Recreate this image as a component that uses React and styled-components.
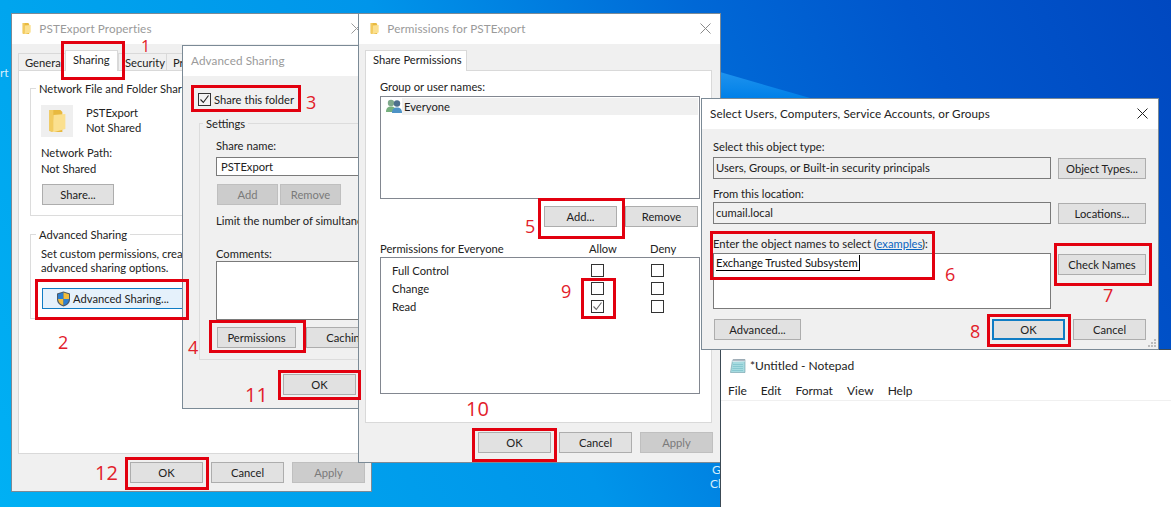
import React from 'react';
import styled, { createGlobalStyle } from 'styled-components';

const GlobalStyle = createGlobalStyle`
  html, body { margin: 0; padding: 0; }
  body {
    width: 1171px;
    height: 507px;
    overflow: hidden;
    font-family: Lato, "Noto Sans", sans-serif;
    font-size: 11.2px;
    color: #222;
  }
  * { box-sizing: border-box; }
`;

const Desktop = styled.div`
  position: relative;
  width: 1171px;
  height: 507px;
  overflow: hidden;
  background: linear-gradient(65deg, #00b0f4 0%, #00a5ee 17%, #0095ea 43%, #0068d6 66%, #0056cc 81%, #0048c0 100%);
`;

const Beam = styled.div`
  position: absolute;
  left: 720px;
  top: 72px;
  width: 90px;
  height: 26px;
  background: linear-gradient(180deg, #1f93ee, #0080e8);
  clip-path: polygon(0 0, 100% 100%, 0 100%);
`;

const DesktopLabel = styled.span`
  position: absolute;
  left: ${(p) => p.$x}px;
  top: ${(p) => p.$y}px;
  color: #d5eefb;
  font-size: 12px;
  line-height: 14px;
`;

const Window = styled.section`
  position: absolute;
  isolation: isolate;
  left: ${(p) => p.$x}px;
  top: ${(p) => p.$y}px;
  width: ${(p) => p.$w}px;
  height: ${(p) => p.$h}px;
  border: 1px solid #7b8a96;
  background: #f0f0f0;
  overflow: hidden;
  display: flex;
  flex-direction: column;
  align-items: flex-start;
`;

const TitleBar = styled.header`
  flex: none;
  width: 100%;
  height: 30px;
  background: #fff;
  display: flex;
  align-items: center;
  gap: 8px;
  padding: 0 ${(p) => p.$right ?? 9}px 2px ${(p) => p.$left ?? 9}px;
  position: relative;
`;

const TitleText = styled.span`
  font-size: 11.7px;
  letter-spacing: 0.1px;
  color: ${(p) => (p.$active ? '#222' : '#9a9a9a')};
  white-space: nowrap;
`;

const CloseIcon = styled.svg`
  margin-left: auto;
  flex: none;
`;

const Body = styled.div`
  width: 100%;
  padding: ${(p) => p.$pad || '7px 0 0 6px'};
  display: flex;
  flex-direction: column;
  align-items: flex-start;
  white-space: nowrap;
`;

const TabRow = styled.div`
  display: flex;
  align-items: flex-end;
  height: 20px;
  position: relative;
  z-index: 1;
  margin-bottom: -1px;
`;

const Tab = styled.div`
  height: ${(p) => (p.$active ? 21 : 18)}px;
  width: ${(p) => p.$w}px;
  padding-left: ${(p) => (p.$active ? 7 : 6)}px;
  line-height: ${(p) => (p.$active ? 17 : 18)}px;
  background: ${(p) => (p.$active ? '#fff' : '#f0f0f0')};
  border: 1px solid #d9d9d9;
  border-bottom: ${(p) => (p.$active ? 'none' : '1px solid #d9d9d9')};
  border-right: ${(p) => (p.$active ? '1px solid #d9d9d9' : 'none')};
  overflow: hidden;
`;

const TabPane = styled.div`
  width: 347px;
  height: ${(p) => p.$h}px;
  background: #fff;
  border: 1px solid #d9d9d9;
  padding: ${(p) => p.$pad};
  display: flex;
  flex-direction: column;
  align-items: flex-start;
`;

const Group = styled.fieldset`
  margin: ${(p) => p.$margin || 0};
  padding: ${(p) => p.$pad || '0 0 0 10px'};
  width: ${(p) => p.$w || 325}px;
  height: ${(p) => p.$h}px;
  min-width: 0;
  flex: none;
  border: 1px solid #dcdcdc;
  display: block;
`;

const Legend = styled.legend`
  margin-left: ${(p) => p.$ml ?? -5}px;
  padding: 0 3px;
  line-height: 15px;
`;

const Text = styled.div`
  line-height: ${(p) => p.$lh || 15}px;
  margin: ${(p) => p.$margin || 0};
`;

const ShareRow = styled.div`
  display: flex;
  gap: 13px;
  margin-top: 9px;
`;

const FolderBox = styled.div`
  width: 32px;
  height: 32px;
  background: #efefef;
  display: flex;
  align-items: center;
  justify-content: center;
`;

const Button = styled.div`
  flex: none;
  width: ${(p) => p.$w || 73}px;
  height: 21px;
  margin: ${(p) => p.$margin || 0};
  display: flex;
  align-items: center;
  justify-content: center;
  gap: 2px;
  background: ${(p) => (p.$focus ? '#e5f1fb' : p.$off ? '#cccccc' : '#e1e1e1')};
  border: 1px solid ${(p) => (p.$focus ? '#0f7cc4' : p.$off ? '#bfbfbf' : '#adadad')};
  color: ${(p) => (p.$off ? '#7a7a7a' : '#222')};
  ${(p) => p.$default && 'border-width: 2px; background: #e1e1e1;'}
`;

const ButtonRow = styled.div`
  display: flex;
  gap: ${(p) => p.$gap ?? 8}px;
  margin: ${(p) => p.$margin || 0};
`;

const CheckRow = styled.label`
  display: flex;
  align-items: center;
  gap: 3px;
  margin: ${(p) => p.$margin || 0};
  height: 13px;
`;

const CheckBox = styled.span`
  width: 13px;
  height: 13px;
  border: 1px solid #333;
  background: ${(p) => (p.$shade ? '#f3f3f3' : '#fff')};
  display: flex;
  align-items: center;
  justify-content: center;
`;

const Input = styled.div`
  width: ${(p) => p.$w || 200}px;
  height: ${(p) => p.$h || 19}px;
  margin: ${(p) => p.$margin || 0};
  background: ${(p) => (p.$readonly ? '#f0f0f0' : '#fff')};
  border: 1px solid #7a7a7a;
  padding: ${(p) => p.$pad || '1px 4px'};
  line-height: 15px;
`;

const ListBox = styled.div`
  width: 320px;
  height: 103px;
  margin-top: 2px;
  border: 1px solid #828790;
  background: #fff;
  padding: 1px 1px 1px 5px;
`;

const ListRow = styled.div`
  display: flex;
  align-items: center;
  height: 17px;
`;

const ListLabel = styled.span`
  flex: 1;
  background: #f0f0f0;
  line-height: 17px;
  padding-left: 2px;
`;

const PermHeader = styled.div`
  display: grid;
  grid-template-columns: 209px 61px auto;
  line-height: 15px;
  margin-top: 14px;
  width: 320px;
`;

const PermGrid = styled.div`
  width: 320px;
  height: 137px;
  margin-top: 1px;
  border: 1px solid #828790;
  background: #fff;
  padding: 3px 0 0 11px;
  display: grid;
  grid-template-columns: 199px 60px auto;
  grid-auto-rows: 18px;
  align-items: center;
`;

const Field = styled.div`
  display: flex;
  gap: 7px;
  align-items: ${(p) => (p.$top ? 'flex-start' : 'flex-end')};
  margin: ${(p) => p.$margin || 0};
`;

const Typed = styled.span`
  border-bottom: 1px solid #000;
  border-right: 1px solid #000;
  color: #111;
  display: inline-block;
  line-height: 15px;
  padding-right: 1px;
`;

const Link = styled.a`
  color: #0a64c0;
  text-decoration: underline;
`;

const Grip = styled.svg`
  position: absolute;
  right: 1px;
  bottom: 1px;
`;

const BottomRow = styled.div`
  display: flex;
  justify-content: space-between;
  width: 433px;
  margin-top: 10px;
  padding-left: 1px;
`;

const Notepad = styled.section`
  position: absolute;
  left: 720px;
  top: 349px;
  width: 460px;
  height: 170px;
  background: #fff;
  border-left: 1px solid #3c4a55;
  border-top: 1px solid #3c4a55;
  font-size: 12px;
`;

const NotepadTitle = styled.div`
  height: 31px;
  display: flex;
  align-items: center;
  gap: 4px;
  padding-left: 9px;
`;

const MenuBar = styled.nav`
  height: 19px;
  display: flex;
  gap: 14px;
  padding-left: 7px;
  align-items: center;
  border-bottom: 1px solid #f0f0f0;
  box-sizing: content-box;
  line-height: 19px;
`;

const RedBox = styled.div`
  position: absolute;
  left: ${(p) => p.$x}px;
  top: ${(p) => p.$y}px;
  width: ${(p) => p.$w}px;
  height: ${(p) => p.$h}px;
  border: 3px solid #e2000f;
`;

const RedNumber = styled.span`
  position: absolute;
  left: ${(p) => p.$x}px;
  top: ${(p) => p.$y}px;
  font-family: "Open Sans", sans-serif;
  font-size: ${(p) => p.$size}px;
  line-height: 20px;
  color: #e2202a;
`;

const FolderIcon = ({ size = 26 }) => (
  <svg width={size * 0.72} height={size} viewBox="0 0 18 26">
    <path d="M1 2h11l2 2v20H4l-3-1z" fill="#e8b93f" />
    <path d="M5 7l12-1v15l-11 3H4z" fill="#fbe08f" />
    <path d="M1 2h4v21H1z" fill="#f2cb5f" />
  </svg>
);

const CloseX = ({ color, size = 11 }) => (
  <CloseIcon width={size} height={size} viewBox="0 0 11 11">
    <path d="M.5.5l10 10M10.500.5l-10 10" stroke={color} strokeWidth="1" fill="none" />
  </CloseIcon>
);

const Shield = () => (
  <svg width="15" height="16" viewBox="0 0 15 16">
    <path d="M7.500 0.500l6.500 2v6c0 3.500-3 6-6.500 7C4 14.500 1 12 1 8.500v-6z" fill="#4a5a68" />
    <path d="M7.500 1.500v6.500H2V3.200z" fill="#2c7fd0" />
    <path d="M7.500 1.500v6.500H13V3.200z" fill="#f3bd3a" />
    <path d="M2 8h5.500v6.300C4.500 13.500 2.300 11.500 2 8z" fill="#f3bd3a" />
    <path d="M13 8H7.500v6.300C10.500 13.500 12.700 11.500 13 8z" fill="#2c7fd0" />
  </svg>
);

const Users = () => (
  <svg width="16" height="15" viewBox="0 0 16 15">
    <circle cx="5" cy="4" r="3.200" fill="#7fa98c" />
    <path d="M0 13c0-4 2-5.500 5-5.500s5 1.500 5 5.500z" fill="#76b07e" />
    <circle cx="11" cy="4.500" r="3.200" fill="#4d6f8c" />
    <path d="M6 14c0-4 2-5.500 5-5.500s5 1.500 5 5.500z" fill="#4e93c6" />
  </svg>
);

const NotepadIcon = () => (
  <svg width="16" height="16" viewBox="0 0 16 16">
    <path d="M2.500 2L15 1.500V14.500H0.500z" fill="#a6dbe0" stroke="#6f9aa6" strokeWidth="0.6" />
    <path d="M2.500 2L15 1.500v2L2.300 4z" fill="#dbe9ee" />
    <path d="M3 6.500h10M2.700 8.500h10.300M2.400 10.500h10.600M2.100 12.500h10.900" stroke="#7fc3cc" strokeWidth="0.8" />
    <path d="M4 1v2M6 1v2M8 1v2M10 1v2M12 1v2M14 1v2" stroke="#667" strokeWidth="0.7" />
  </svg>
);

const Check = ({ color }) => (
  <svg width="11" height="11" viewBox="0 0 11 11">
    <path d="M1.500 5.500l2.800 3L9.500 1.500" fill="none" stroke={color} strokeWidth="1.100" />
  </svg>
);

const marks = [
  { x: 61, y: 41, w: 64, h: 39 },
  { x: 191, y: 85, w: 110, h: 27 },
  { x: 35, y: 279, w: 154, h: 41 },
  { x: 209, y: 320, w: 97, h: 33 },
  { x: 278, y: 370, w: 83, h: 30 },
  { x: 125, y: 457, w: 84, h: 33 },
  { x: 538, y: 198, w: 87, h: 41 },
  { x: 581, y: 278, w: 35, h: 41 },
  { x: 472, y: 428, w: 85, h: 34 },
  { x: 710, y: 231, w: 225, h: 49 },
  { x: 1054, y: 243, w: 98, h: 43 },
  { x: 987, y: 314, w: 84, h: 33 },
];

const numbers = [
  ['1', 141, 36, 16], ['3', 306, 92, 18], ['2', 58, 332, 18], ['4', 188, 337, 18],
  ['11', 245, 385, 20], ['12', 95, 463, 20], ['5', 525, 216, 18], ['9', 561, 281, 18],
  ['10', 466, 399, 20], ['6', 945, 264, 18], ['7', 1103, 285, 18], ['8', 970, 321, 18],
];

function App() {
  return (
    <Desktop>
      <GlobalStyle />
      <Beam />
      <DesktopLabel $x={0} $y={66}>rt</DesktopLabel>
      <DesktopLabel $x={712} $y={463}>G</DesktopLabel>
      <DesktopLabel $x={710} $y={477}>Cl</DesktopLabel>

      <Window $x={11} $y={13} $w={361} $h={479}>
        <TitleBar $left={10}>
          <FolderIcon size={13} />
          <TitleText>PSTExport Properties</TitleText>
          <CloseX color="#9a9a9a" />
        </TitleBar>
        <Body>
          <TabRow>
            <Tab $w={47}>General</Tab>
            <Tab $w={53} $active>Sharing</Tab>
            <Tab $w={48}>Security</Tab>
            <Tab $w={60}>Previous Versions</Tab>
          </TabRow>
          <TabPane $h={384} $pad="10px 0 0 11px">
            <Group $h={135}>
              <Legend>Network File and Folder Sharing</Legend>
              <ShareRow>
                <FolderBox><FolderIcon /></FolderBox>
                <div>
                  <Text>PSTExport</Text>
                  <Text>Not Shared</Text>
                </div>
              </ShareRow>
              <Text $lh={16} $margin="8px 0 0">Network Path:</Text>
              <Text $lh={16}>Not Shared</Text>
              <Button $w={72} $margin="7px 0 0 1px">Share...</Button>
            </Group>
            <Group $h={92} $margin="11px 0 0">
              <Legend>Advanced Sharing</Legend>
              <Text $lh={14} $margin="5px 0 0">Set custom permissions, create multiple shares, and set other</Text>
              <Text $lh={13}>advanced sharing options.</Text>
              <Button $w={141} $focus $margin="14px 0 0 1px">
                <Shield />Advanced Sharing...
              </Button>
            </Group>
          </TabPane>
          <ButtonRow $margin="8px 0 0 112px">
            <Button>OK</Button>
            <Button>Cancel</Button>
            <Button $off>Apply</Button>
          </ButtonRow>
        </Body>
      </Window>

      <Window $x={182} $y={45} $w={177} $h={364}>
        <TitleBar $left={8}>
          <TitleText>Advanced Sharing</TitleText>
        </TitleBar>
        <Body $pad="17px 0 0 15px">
          <CheckRow>
            <CheckBox $shade><Check color="#222" /></CheckBox>
            Share this folder
          </CheckRow>
          <Group $w={220} $h={244} $margin="10px 0 0 1px" $pad="0 0 0 16px">
            <Legend $ml={-13}>Settings</Legend>
            <Text $margin="7px 0 0">Share name:</Text>
            <Input $margin="4px 0 0">PSTExport</Input>
            <ButtonRow $gap={2} $margin="8px 0 0 1px">
              <Button $w={61} $off>Add</Button>
              <Button $w={61} $off>Remove</Button>
            </ButtonRow>
            <Text $lh={14} $margin="9px 0 0">Limit the number of simultaneous users to:</Text>
            <Text $lh={14} $margin="19px 0 0">Comments:</Text>
            <Input $h={59} />
            <ButtonRow $gap={10} $margin="7px 0 0 1px">
              <Button $w={79}>Permissions</Button>
              <Button $w={80}>Caching</Button>
            </ButtonRow>
          </Group>
          <Button $margin="14px 0 0 85px">OK</Button>
        </Body>
      </Window>

      <Window $x={358} $y={13} $w={363} $h={450}>
        <TitleBar $left={11} $right={9}>
          <FolderIcon size={13} />
          <TitleText>Permissions for PSTExport</TitleText>
          <CloseX color="#8a8a8a" />
        </TitleBar>
        <Body>
          <TabRow>
            <Tab $w={102} $active>Share Permissions</Tab>
          </TabRow>
          <TabPane $h={353} $pad="8px 0 0 14px">
            <Text>Group or user names:</Text>
            <ListBox>
              <ListRow>
                <Users />
                <ListLabel>Everyone</ListLabel>
              </ListRow>
            </ListBox>
            <ButtonRow $margin="7px 0 0 164px">
              <Button>Add...</Button>
              <Button>Remove</Button>
            </ButtonRow>
            <PermHeader>
              <span>Permissions for Everyone</span>
              <span>Allow</span>
              <span>Deny</span>
            </PermHeader>
            <PermGrid>
              <span>Full Control</span><CheckBox /><CheckBox />
              <span>Change</span><CheckBox /><CheckBox />
              <span>Read</span><CheckBox><Check color="#666" /></CheckBox><CheckBox />
            </PermGrid>
          </TabPane>
          <ButtonRow $margin="9px 0 0 113px">
            <Button>OK</Button>
            <Button>Cancel</Button>
            <Button $off>Apply</Button>
          </ButtonRow>
        </Body>
      </Window>

      <Notepad>
        <NotepadTitle>
          <NotepadIcon />
          <span>*Untitled - Notepad</span>
        </NotepadTitle>
        <MenuBar>
          <span>File</span>
          <span>Edit</span>
          <span>Format</span>
          <span>View</span>
          <span>Help</span>
        </MenuBar>
      </Notepad>

      <Window $x={701} $y={98} $w={458} $h={252}>
        <TitleBar $left={8} $right={10}>
          <TitleText $active>Select Users, Computers, Service Accounts, or Groups</TitleText>
          <CloseX color="#222" />
        </TitleBar>
        <Body $pad="10px 0 0 11px">
          <Text>Select this object type:</Text>
          <Field $margin="3px 0 0">
            <Input $readonly $w={338} $h={22} $pad="2px 2px">Users, Groups, or Built-in security principals</Input>
            <Button $w={88}>Object Types...</Button>
          </Field>
          <Text $margin="7px 0 0">From this location:</Text>
          <Field $margin="1px 0 0">
            <Input $readonly $w={338} $h={22} $pad="2px 2px">cumail.local</Input>
            <Button $w={88}>Locations...</Button>
          </Field>
          <Text $margin="12px 0 0">Enter the object names to select (<Link>examples</Link>):</Text>
          <Field $top $margin="2px 0 0">
            <Input $w={338} $h={56} $pad="1px 2px">
              <Typed>Exchange Trusted Subsystem</Typed>
            </Input>
            <Button $w={88} $margin="1px 0 0">Check Names</Button>
          </Field>
          <BottomRow>
            <Button $w={87}>Advanced...</Button>
            <ButtonRow>
              <Button $focus $default>OK</Button>
              <Button>Cancel</Button>
            </ButtonRow>
          </BottomRow>
        </Body>
        <Grip width="10" height="10" viewBox="0 0 10 10">
          <path d="M7 1h2v2H7zM4 4h2v2H4zM7 4h2v2H7zM1 7h2v2H1zM4 7h2v2H4zM7 7h2v2H7z" fill="#bcbcbc" />
        </Grip>
      </Window>

      {marks.map((m) => (
        <RedBox key={`${m.x}-${m.y}`} $x={m.x} $y={m.y} $w={m.w} $h={m.h} />
      ))}
      {numbers.map(([label, x, y, size]) => (
        <RedNumber key={label} $x={x} $y={y} $size={size}>{label}</RedNumber>
      ))}
    </Desktop>
  );
}

export default App;
